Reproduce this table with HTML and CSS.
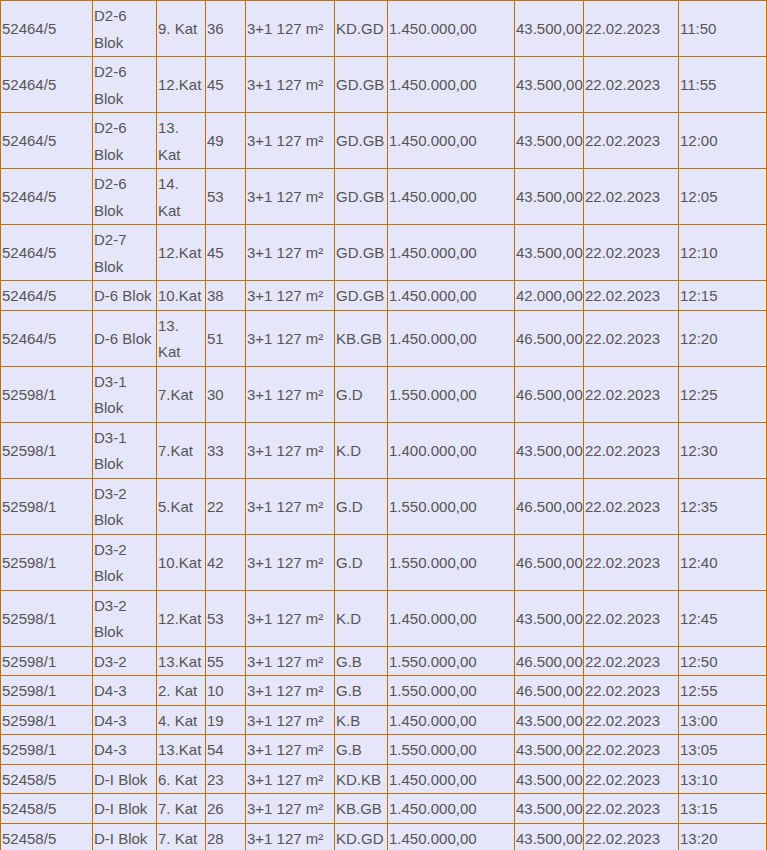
FILE: index.html
```html
<!DOCTYPE html>
<html>
<head>
<meta charset="utf-8">
<link rel="stylesheet" href="styles.css">
</head>
<body>
<table class="sales">
<colgroup>
<col class="c-ada"><col class="c-blok"><col class="c-kat"><col class="c-no"><col class="c-tip"><col class="c-cephe"><col class="c-fiyat"><col class="c-tem"><col class="c-tarih"><col class="c-saat">
</colgroup>
<tbody>
<tr><td>52464/5</td><td>D2-6 Blok</td><td>9. Kat</td><td>36</td><td>3+1 127 m²</td><td>KD.GD</td><td>1.450.000,00</td><td>43.500,00</td><td>22.02.2023</td><td>11:50</td></tr>
<tr><td>52464/5</td><td>D2-6 Blok</td><td>12.Kat</td><td>45</td><td>3+1 127 m²</td><td>GD.GB</td><td>1.450.000,00</td><td>43.500,00</td><td>22.02.2023</td><td>11:55</td></tr>
<tr><td>52464/5</td><td>D2-6 Blok</td><td>13. Kat</td><td>49</td><td>3+1 127 m²</td><td>GD.GB</td><td>1.450.000,00</td><td>43.500,00</td><td>22.02.2023</td><td>12:00</td></tr>
<tr><td>52464/5</td><td>D2-6 Blok</td><td>14. Kat</td><td>53</td><td>3+1 127 m²</td><td>GD.GB</td><td>1.450.000,00</td><td>43.500,00</td><td>22.02.2023</td><td>12:05</td></tr>
<tr><td>52464/5</td><td>D2-7 Blok</td><td>12.Kat</td><td>45</td><td>3+1 127 m²</td><td>GD.GB</td><td>1.450.000,00</td><td>43.500,00</td><td>22.02.2023</td><td>12:10</td></tr>
<tr><td>52464/5</td><td>D-6 Blok</td><td>10.Kat</td><td>38</td><td>3+1 127 m²</td><td>GD.GB</td><td>1.450.000,00</td><td>42.000,00</td><td>22.02.2023</td><td>12:15</td></tr>
<tr><td>52464/5</td><td>D-6 Blok</td><td>13. Kat</td><td>51</td><td>3+1 127 m²</td><td>KB.GB</td><td>1.450.000,00</td><td>46.500,00</td><td>22.02.2023</td><td>12:20</td></tr>
<tr><td>52598/1</td><td>D3-1 Blok</td><td>7.Kat</td><td>30</td><td>3+1 127 m²</td><td>G.D</td><td>1.550.000,00</td><td>46.500,00</td><td>22.02.2023</td><td>12:25</td></tr>
<tr><td>52598/1</td><td>D3-1 Blok</td><td>7.Kat</td><td>33</td><td>3+1 127 m²</td><td>K.D</td><td>1.400.000,00</td><td>43.500,00</td><td>22.02.2023</td><td>12:30</td></tr>
<tr><td>52598/1</td><td>D3-2 Blok</td><td>5.Kat</td><td>22</td><td>3+1 127 m²</td><td>G.D</td><td>1.550.000,00</td><td>46.500,00</td><td>22.02.2023</td><td>12:35</td></tr>
<tr><td>52598/1</td><td>D3-2 Blok</td><td>10.Kat</td><td>42</td><td>3+1 127 m²</td><td>G.D</td><td>1.550.000,00</td><td>46.500,00</td><td>22.02.2023</td><td>12:40</td></tr>
<tr><td>52598/1</td><td>D3-2 Blok</td><td>12.Kat</td><td>53</td><td>3+1 127 m²</td><td>K.D</td><td>1.450.000,00</td><td>43.500,00</td><td>22.02.2023</td><td>12:45</td></tr>
<tr><td>52598/1</td><td>D3-2</td><td>13.Kat</td><td>55</td><td>3+1 127 m²</td><td>G.B</td><td>1.550.000,00</td><td>46.500,00</td><td>22.02.2023</td><td>12:50</td></tr>
<tr><td>52598/1</td><td>D4-3</td><td>2. Kat</td><td>10</td><td>3+1 127 m²</td><td>G.B</td><td>1.550.000,00</td><td>46.500,00</td><td>22.02.2023</td><td>12:55</td></tr>
<tr><td>52598/1</td><td>D4-3</td><td>4. Kat</td><td>19</td><td>3+1 127 m²</td><td>K.B</td><td>1.450.000,00</td><td>43.500,00</td><td>22.02.2023</td><td>13:00</td></tr>
<tr><td>52598/1</td><td>D4-3</td><td>13.Kat</td><td>54</td><td>3+1 127 m²</td><td>G.B</td><td>1.550.000,00</td><td>43.500,00</td><td>22.02.2023</td><td>13:05</td></tr>
<tr><td>52458/5</td><td>D-I Blok</td><td>6. Kat</td><td>23</td><td>3+1 127 m²</td><td>KD.KB</td><td>1.450.000,00</td><td>43.500,00</td><td>22.02.2023</td><td>13:10</td></tr>
<tr><td>52458/5</td><td>D-I Blok</td><td>7. Kat</td><td>26</td><td>3+1 127 m²</td><td>KB.GB</td><td>1.450.000,00</td><td>43.500,00</td><td>22.02.2023</td><td>13:15</td></tr>
<tr><td>52458/5</td><td>D-I Blok</td><td>7. Kat</td><td>28</td><td>3+1 127 m²</td><td>KD.GD</td><td>1.450.000,00</td><td>43.500,00</td><td>22.02.2023</td><td>13:20</td></tr>
</tbody>
</table>
</body>
</html>
```

FILE: styles.css
```css
html, body {
  margin: 0;
  padding: 0;
  background: #ffffff;
}

.sales {
  border-collapse: collapse;
  table-layout: fixed;
  width: 766px;
  background: #e6e6fa;
  font-family: "Liberation Sans", Arial, sans-serif;
  font-size: 15px;
  color: #555555;
}

.sales td {
  border: 1px solid #c07200;
  padding: 2px 1px 0;
  line-height: 26.5px;
  vertical-align: middle;
  text-align: left;
  white-space: normal;
}

.c-ada { width: 92px; }
.c-blok { width: 64px; }
.c-kat { width: 49px; }
.c-no { width: 40px; }
.c-tip { width: 89px; }
.c-cephe { width: 53px; }
.c-fiyat { width: 127px; }
.c-tem { width: 69px; }
.c-tarih { width: 95px; }
.c-saat { width: 88px; }
```
